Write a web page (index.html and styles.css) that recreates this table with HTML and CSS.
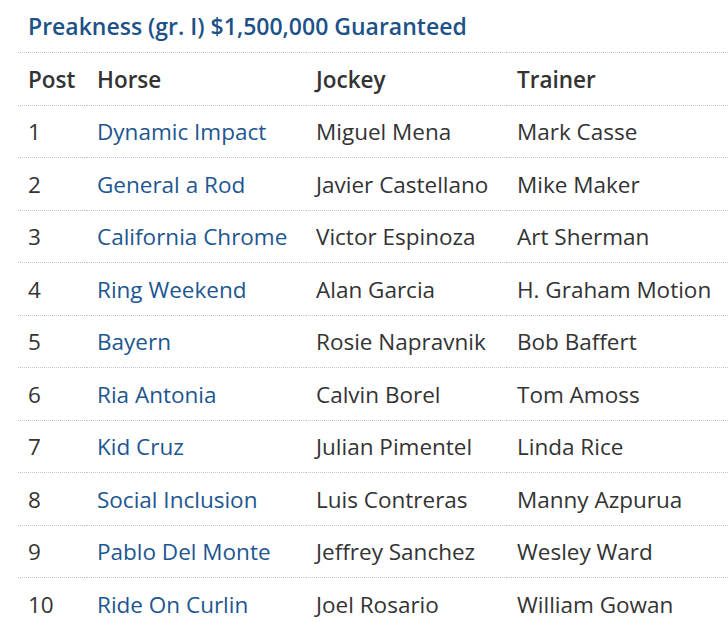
FILE: index.html
```html
<!DOCTYPE html>
<html>
<head>
<meta charset="utf-8">
<link rel="stylesheet" href="styles.css">
</head>
<body>
<div class="wrap">
  <h2 class="title">Preakness (gr. I) $1,500,000 Guaranteed</h2>
  <table class="entries">
    <thead>
      <tr><th class="c-post">Post</th><th class="c-horse">Horse</th><th class="c-jockey">Jockey</th><th class="c-trainer">Trainer</th></tr>
    </thead>
    <tbody>
      <tr><td>1</td><td><a href="#">Dynamic Impact</a></td><td>Miguel Mena</td><td>Mark Casse</td></tr>
      <tr><td>2</td><td><a href="#">General a Rod</a></td><td>Javier Castellano</td><td>Mike Maker</td></tr>
      <tr><td>3</td><td><a href="#">California Chrome</a></td><td>Victor Espinoza</td><td>Art Sherman</td></tr>
      <tr><td>4</td><td><a href="#">Ring Weekend</a></td><td>Alan Garcia</td><td>H. Graham Motion</td></tr>
      <tr><td>5</td><td><a href="#">Bayern</a></td><td>Rosie Napravnik</td><td>Bob Baffert</td></tr>
      <tr><td>6</td><td><a href="#">Ria Antonia</a></td><td>Calvin Borel</td><td>Tom Amoss</td></tr>
      <tr><td>7</td><td><a href="#">Kid Cruz</a></td><td>Julian Pimentel</td><td>Linda Rice</td></tr>
      <tr><td>8</td><td><a href="#">Social Inclusion</a></td><td>Luis Contreras</td><td>Manny Azpurua</td></tr>
      <tr><td>9</td><td><a href="#">Pablo Del Monte</a></td><td>Jeffrey Sanchez</td><td>Wesley Ward</td></tr>
      <tr><td>10</td><td><a href="#">Ride On Curlin</a></td><td>Joel Rosario</td><td>William Gowan</td></tr>
    </tbody>
  </table>
</div>
</body>
</html>
```
FILE: styles.css
```css
html, body {
  margin: 0;
  padding: 0;
  background: #fff;
}
body {
  font-family: "Open Sans", "DejaVu Sans", sans-serif;
  color: #333;
  overflow: hidden;
}
.wrap {
  margin-left: 18px;
}
.title {
  margin: 0;
  padding: 11px 10px 11px;
  font-size: 23px;
  line-height: 30px;
  font-weight: 600;
  color: #1c5287;
}
.entries {
  width: 100%;
  border-collapse: collapse;
  table-layout: fixed;
  font-size: 22.5px;
  line-height: 30px;
}
.entries th,
.entries td {
  text-align: left;
  padding: 11.5px 10px 10px;
  border-top: 1px dotted #c4c4c4;
  white-space: nowrap;
  vertical-align: top;
}
.entries th {
  font-weight: 600;
  color: #333;
}
.c-post { width: 49px; }
.c-horse { width: 199px; }
.c-jockey { width: 181px; }
.entries a {
  color: #1d5690;
  text-decoration: none;
}
```
